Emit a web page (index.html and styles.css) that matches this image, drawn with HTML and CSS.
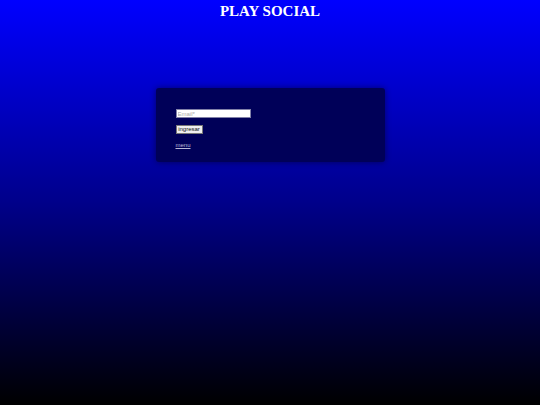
FILE: index.html
```html
<!DOCTYPE html>
<html>
<head>
<meta charset="utf-8">
<link rel="stylesheet" href="styles.css">
</head>
<body>
<h1 class="title">PLAY SOCIAL</h1>
<div class="panel">
  <form class="login">
    <input class="email" type="text" placeholder="Email*">
    <button class="btn" type="button">ingresar</button>
    <a class="menu" href="#">menu</a>
  </form>
</div>
</body>
</html>
```
FILE: styles.css
```css
html, body {
  margin: 0;
  padding: 0;
  height: 100%;
}
body {
  background: linear-gradient(to bottom, #0000ff 0%, #00008a 50%, #000000 100%);
  font-family: "Liberation Sans", Arial, sans-serif;
  overflow: hidden;
}
.title {
  margin: 0;
  padding-top: 3px;
  text-align: center;
  color: #fff;
  font-family: "Liberation Serif", "Times New Roman", serif;
  font-weight: bold;
  font-size: 15px;
  line-height: 17px;
}
.panel {
  width: 229px;
  height: 74px;
  box-sizing: border-box;
  margin: 68px auto 0;
  background: #000058;
  border-radius: 3px;
  box-shadow: 0 0 6px rgba(0, 0, 0, 0.45);
  padding: 21px 20px 0;
}
.login {
  display: flex;
  flex-direction: column;
  align-items: flex-start;
}
.email {
  width: 75px;
  height: 9px;
  box-sizing: border-box;
  margin: 0;
  padding: 0 1px;
  border: 1px solid #8080a8;
  background: #fff;
  font-size: 6px;
  line-height: 7px;
  font-family: "Liberation Sans", Arial, sans-serif;
}
.email::placeholder {
  color: #aaa;
}
.btn {
  margin-top: 7px;
  width: 27px;
  height: 9px;
  box-sizing: border-box;
  padding: 0;
  border: 1px solid #777;
  background: #efefef;
  color: #111;
  font-size: 6px;
  line-height: 7px;
  font-family: "Liberation Sans", Arial, sans-serif;
}
.menu {
  margin-top: 7px;
  color: #b8b8d8;
  font-size: 6px;
  line-height: 8px;
  text-decoration: underline;
}
```
